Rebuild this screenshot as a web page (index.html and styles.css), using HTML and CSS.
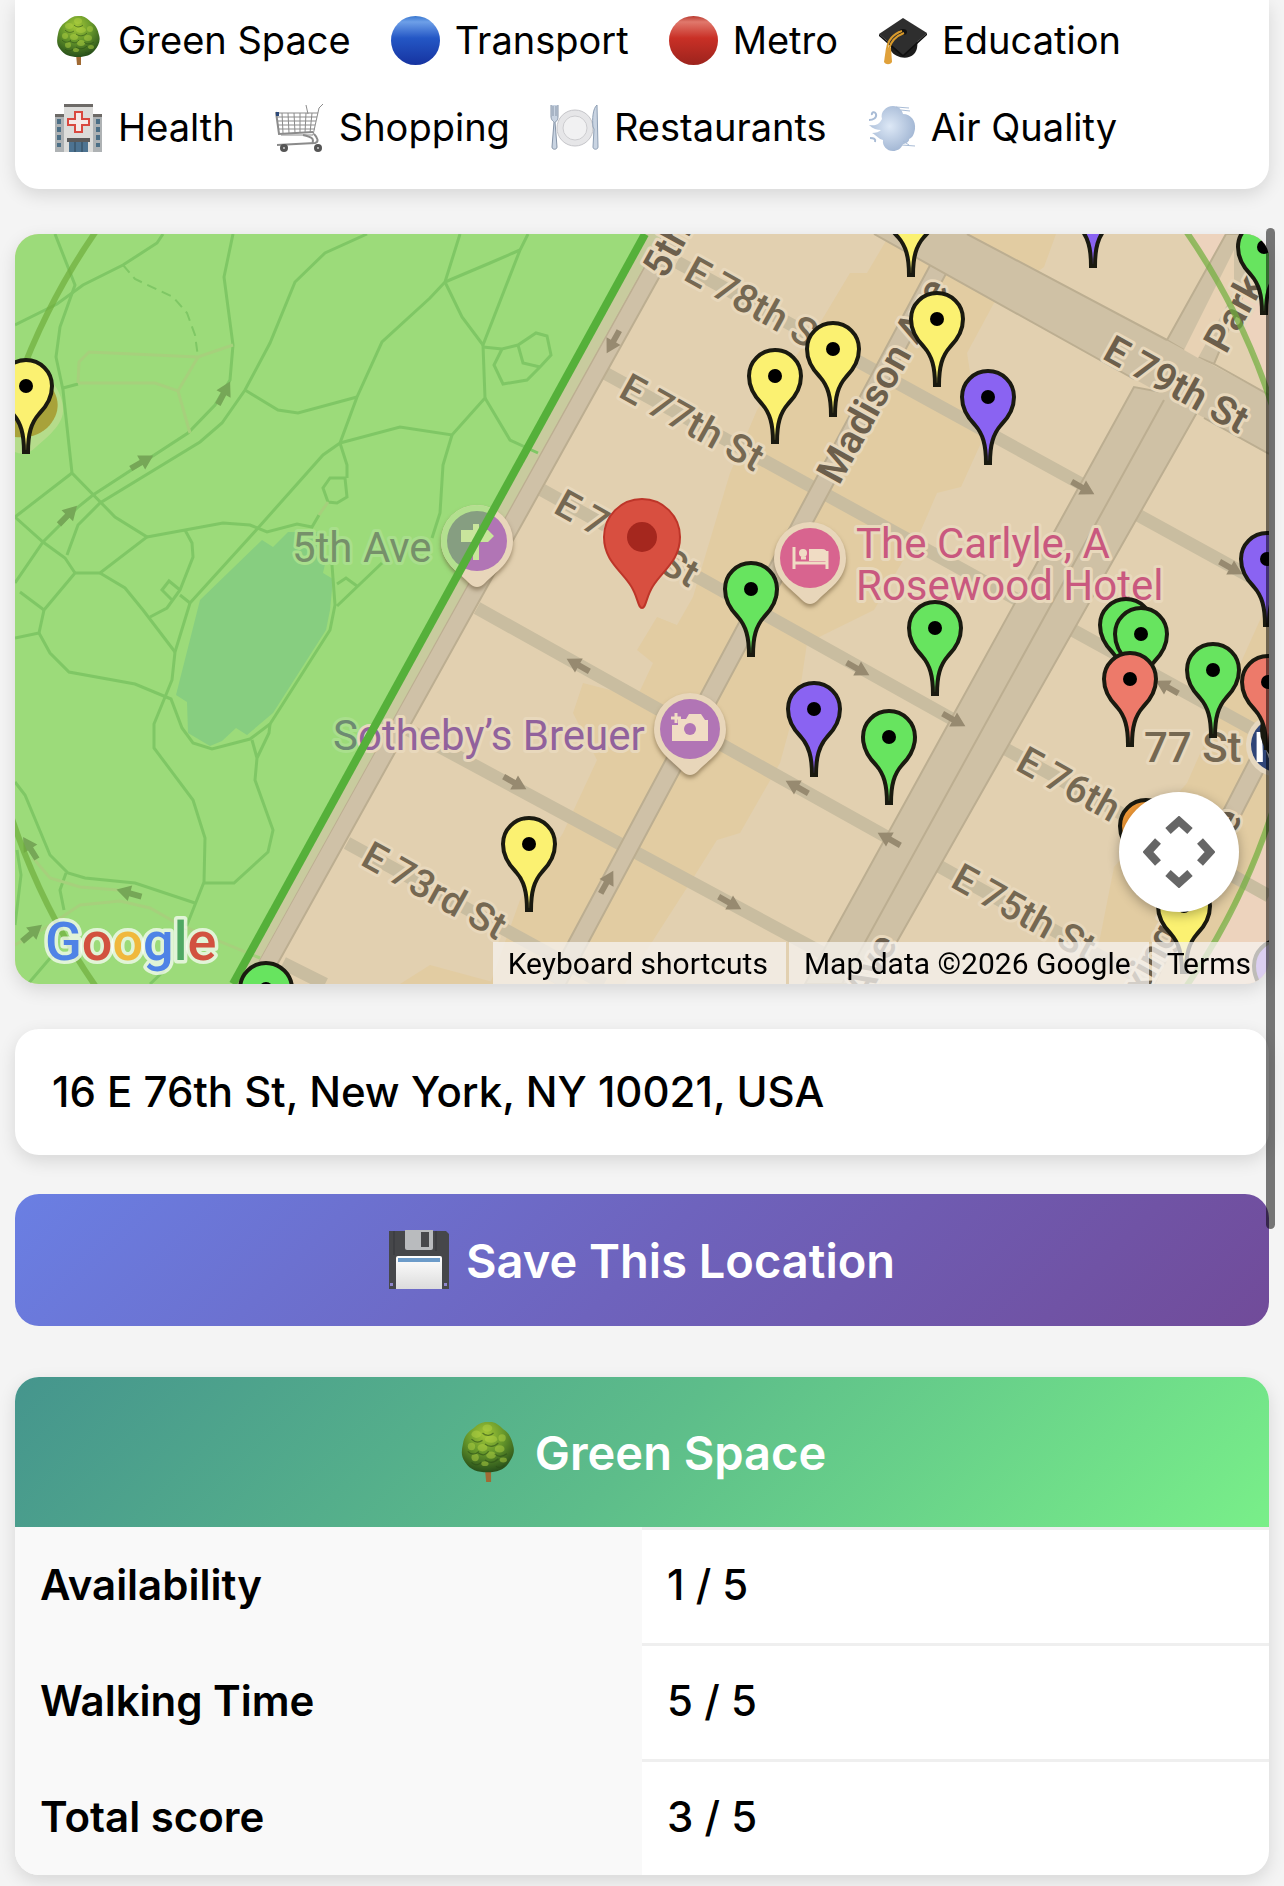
FILE: index.html
```html
<!DOCTYPE html>
<html lang="en">
<head>
  <meta charset="UTF-8">
  <meta name="viewport" content="width=device-width, initial-scale=1.0">
  <title>Neighborhood Score</title>
  <link rel="stylesheet" href="styles.css">
</head>
<body>
  <!-- Shared icon shapes -->
  <svg class="defs" aria-hidden="true">
    <defs>
      <radialGradient id="leaf" cx="45%" cy="25%" r="75%">
        <stop offset="0" stop-color="#a3c838"/>
        <stop offset="0.5" stop-color="#64952a"/>
        <stop offset="1" stop-color="#28501a"/>
      </radialGradient>
      <linearGradient id="blue-ball" x1="0" y1="0" x2="0" y2="1">
        <stop offset="0" stop-color="#3a78d0"/>
        <stop offset="0.12" stop-color="#6d9fe8"/>
        <stop offset="0.45" stop-color="#2457c5"/>
        <stop offset="1" stop-color="#1633a0"/>
      </linearGradient>
      <linearGradient id="red-ball" x1="0" y1="0" x2="0" y2="1">
        <stop offset="0" stop-color="#b93a30"/>
        <stop offset="0.12" stop-color="#e0786c"/>
        <stop offset="0.45" stop-color="#c93026"/>
        <stop offset="1" stop-color="#9c231d"/>
      </linearGradient>
      <radialGradient id="puff" cx="45%" cy="45%" r="60%">
        <stop offset="0" stop-color="#dde8f6"/>
        <stop offset="1" stop-color="#9fb4d2"/>
      </radialGradient>
      <linearGradient id="paper" x1="0" y1="0" x2="0" y2="1">
        <stop offset="0" stop-color="#ffffff"/>
        <stop offset="1" stop-color="#dcdcdc"/>
      </linearGradient>
      <symbol id="icon-tree" viewBox="0 0 49 49">
        <path d="M22 38h5v11h-4z" fill="#a06a34"/>
        <path d="M24 0c6-1 10 3 13 6 5 3 7 8 8 13 2 6-1 11-4 15-4 5-9 7-17 7-8 0-14-2-18-8-4-5-3-10-2-15 1-6 4-10 9-13 3-3 6-5 11-5z" fill="url(#leaf)"/>
        <g fill="#b2d243" opacity="0.5">
          <ellipse cx="24" cy="5" rx="4" ry="3"/><ellipse cx="15" cy="10" rx="4" ry="3"/><ellipse cx="27" cy="14" rx="5" ry="3"/>
          <ellipse cx="36" cy="13" rx="3" ry="3"/><ellipse cx="11" cy="20" rx="3" ry="3"/><ellipse cx="20" cy="21" rx="4" ry="3"/>
          <ellipse cx="34" cy="22" rx="4" ry="3"/><ellipse cx="27" cy="27" rx="4" ry="3"/><ellipse cx="14" cy="29" rx="3" ry="3"/>
          <ellipse cx="37" cy="31" rx="3" ry="2"/><ellipse cx="22" cy="34" rx="3" ry="2"/>
        </g>
        <g fill="none" stroke="#2c4f17" stroke-width="1" opacity="0.6">
          <path d="M11 14c3 3 6 3 9 1M20 9c3 3 7 2 9 0M22 18c4 3 8 2 11-1M8 24c3 3 6 3 9 0M16 25c4 3 7 2 9-1M30 26c3 3 7 2 10 0M22 31c4 3 8 2 11-1M11 33c3 3 6 2 8 0M31 36c2 2 5 1 7-1"/>
        </g>
      </symbol>
      <symbol id="icon-blue" viewBox="0 0 50 50"><circle cx="25" cy="25" r="25" fill="url(#blue-ball)"/></symbol>
      <symbol id="icon-red" viewBox="0 0 50 50"><circle cx="25" cy="25" r="25" fill="url(#red-ball)"/></symbol>
      <symbol id="icon-cap" viewBox="0 0 49 49">
        <path d="M13 24v11c4 6 16 10 23 3 3-3 4-8 3-16z" fill="#1c1c1c"/>
        <path d="M25 2L1 18l24 21 24-22z" fill="#2e2e2e"/>
        <path d="M1 18l24 21 24-22v2L25 41 1 20z" fill="#0f0f0f"/>
        <ellipse cx="25" cy="16" rx="4" ry="3" fill="#111"/>
        <path d="M24 15C15 18 10 23 9 33M26 17c-8 3-13 8-15 16" fill="none" stroke="#d99a2b" stroke-width="2"/>
        <path d="M8 32h5l1 14c-2 3-6 3-8 0z" fill="#e0a13a"/>
      </symbol>
      <symbol id="icon-hospital" viewBox="0 0 49 49">
        <path d="M1 12h47v37H1z" fill="#aeb2b4"/>
        <path d="M1 11h9v3H1zM39 11h9v3h-9zM10 1h29v3H10z" fill="#6d6a67"/>
        <path d="M10 4h29v45H10z" fill="#dcdcda"/>
        <path d="M3 16h4v5H3zM3 24h4v5H3zM3 32h4v5H3zM3 40h4v4H3zM42 16h4v5h-4zM42 24h4v5h-4zM42 32h4v5h-4zM42 40h4v4h-4z" fill="#4c6f86"/>
        <path d="M21 9h7v7h7v6h-7v7h-7v-7h-7v-6h7z" fill="#f5e9e7" stroke="#d9483f" stroke-width="2"/>
        <path d="M13 35h23v4H13z" fill="#5b5b5b"/>
        <path d="M15 39h19v10H15z" fill="#4d7391"/>
        <path d="M21 39v10M28 39v10" stroke="#2f4656" stroke-width="1"/>
      </symbol>
      <symbol id="icon-cart" viewBox="0 0 49 49">
        <g fill="none" stroke="#8b8b8b" stroke-width="1">
          <path d="M48 1l-4 4-6 27H6M1 10h42M2 14h40M3 18h38M3 22h37M4 26h36M7 10l1 20M13 10l1 20M19 10l1 20M25 10v20M31 10l-1 20M37 10l-2 20M31 2l2 9"/>
          <path d="M1 9l3 22 34-2M28 32c8 2 12 3 9 9M2 42l38-2c4-1 3-5-1-9" stroke-width="2"/>
        </g>
        <path d="M1 9h3v4H1z" fill="#2d4a7a"/>
        <circle cx="9" cy="45" r="4" fill="#555"/><circle cx="43" cy="45" r="4" fill="#555"/>
        <circle cx="9" cy="45" r="1" fill="#ccc"/><circle cx="43" cy="45" r="1" fill="#ccc"/>
      </symbol>
      <symbol id="icon-plate" viewBox="0 0 49 49">
        <circle cx="25" cy="25" r="18" fill="#e6e6e8" stroke="#c6c6ca"/>
        <circle cx="25" cy="25" r="12" fill="#f1f1f2" stroke="#cdcdd0"/>
        <path d="M1 2v11c0 4 2 5 3 6L2 44c0 3 5 3 5 0L5 19c2-1 3-2 3-6V2" fill="#c9d4e2" stroke="#8795a8" stroke-width="1"/>
        <path d="M3 3v10M6 3v10" stroke="#8795a8" stroke-width="1"/>
        <path d="M47 2c-4 3-5 14-4 22l1 2-1 18c0 3 5 3 5 0z" fill="#c9d4e2" stroke="#8fa0b5" stroke-width="1"/>
      </symbol>
      <symbol id="icon-wind" viewBox="0 0 49 49">
        <path d="M15 16c-2-7 4-13 11-13 6 0 9 4 10 8 8 0 13 7 12 15-1 6-3 9-6 10 1 3-5 5-6 5-2 5-6 7-10 7-6 0-11-5-10-11-4-1-6-4-11-7 4 0 7-1 9-3-4 0-8-1-12-5 6 1 10 0 13-6z" fill="url(#puff)"/>
        <path d="M29 4l13 1M34 7l9 1M35 42l13 1M36 38l6 4" stroke="#a9bcd6" stroke-width="1"/>
        <path d="M2 17c4 0 8-2 7-6-1-3-5-2-4 1M3 35c4 0 6 1 5 4" fill="none" stroke="#a9bcd6" stroke-width="2"/>
      </symbol>
      <symbol id="icon-floppy" viewBox="0 0 60 60">
        <path d="M0 1h57l3 3v55H0z" fill="#46474a"/>
        <path d="M5 1v24M47 1v20" stroke="#35363a" stroke-width="1"/>
        <path d="M16 0h28v18a2 2 0 0 1-2 2H18a2 2 0 0 1-2-2z" fill="#b9bbbe"/>
        <path d="M32 2h8v15h-8z" fill="#47484b"/>
        <path d="M9 26h42a2 2 0 0 1 2 2v31H7V28a2 2 0 0 1 2-2z" fill="url(#paper)"/>
        <path d="M9 28h42v4H9z" fill="#6c9bc9"/>
        <path d="M1 53h3v3H1zM55 53h3v3h-3z" fill="#8f86cc"/>
      </symbol>
      <symbol id="pin" viewBox="-30 -30 60 100" overflow="visible">
        <path d="M-2 66C-2 48-5 37-13 28-22 19-26 10-26 0A26 26 0 1 1 26 0C26 10 22 19 13 28 5 37 2 48 2 66z" stroke="#1a1a10" stroke-width="4"/>
        <circle r="7" fill="#000"/>
      </symbol>
      <symbol id="poi" viewBox="-40 -40 80 90" overflow="visible">
        <path d="M-8 42C-18 31-36 22-36 0A36 36 0 1 1 36 0C36 22 18 31 8 42Q0 50-8 42z" fill="#e8d6ba"/>
        <circle r="30"/>
      </symbol>
      <symbol id="way" viewBox="-13 -9 26 18" overflow="visible"><path d="M-13-3H-1V-8L13 0-1 8V3H-13z"/></symbol>
      <clipPath id="park-side"><path d="M15 234H645L233 984H15z"/></clipPath>
    </defs>
  </svg>

  <div class="scroll-thumb"></div>

  <main class="page">
    <!-- Legend -->
    <ul class="card legend">
      <li><svg class="icon"><use href="#icon-tree"/></svg>Green Space</li>
      <li><svg class="icon"><use href="#icon-blue"/></svg>Transport</li>
      <li><svg class="icon"><use href="#icon-red"/></svg>Metro</li>
      <li><svg class="icon"><use href="#icon-cap"/></svg>Education</li>
      <li><svg class="icon"><use href="#icon-hospital"/></svg>Health</li>
      <li><svg class="icon"><use href="#icon-cart"/></svg>Shopping</li>
      <li><svg class="icon"><use href="#icon-plate"/></svg>Restaurants</li>
      <li><svg class="icon"><use href="#icon-wind"/></svg>Air Quality</li>
    </ul>

    <!-- Map -->
    <section class="map" aria-label="Map">
      <svg class="map-canvas" viewBox="15 234 1254 750" preserveAspectRatio="xMidYMid slice">
        <rect x="15" y="234" width="1254" height="750" fill="#edd3bd"/>
        <circle cx="641" cy="609" r="663" fill="#e2d0b0"/>

        <!-- Commercial blocks -->
        <g fill="#e2cca2">
          <path d="M850 273L820 323 757 410 730 473 693 597 677 625 657 617 637 650 653 663 637 697 583 683 573 713 597 760 563 833 520 900 490 984H625L690 883 717 840 740 833 780 763 800 690 807 643 874 610 921 530 937 493 961 487 981 443 967 353 994 303 1044 267 1056 234H890L867 273z"/>
          <path d="M430 965L500 984H400z"/>
          <path d="M1269 600L1215 720 1187 783 1114 867 1101 933 1090 984H1180L1240 900 1269 830z"/>
        </g>

        <!-- Streets -->
        <g class="street">
          <path d="M677 262L1269 587M603 372L1269 738M542 490L1269 896M477 608L1150 984M405 728L880 984M347 843L604 984M283 963L325 984"/>
        </g>
        <g class="avenue-edge"><path d="M673 234L256 984M957 234L556 984M1280 720L1144 984"/></g>
        <g class="avenue"><path d="M673 234L256 984M957 234L556 984M1280 720L1144 984"/></g>
        <g fill="#cfc1a5" stroke="#bcae91" stroke-width="2">
          <path d="M1167 340L1226 234H1269L1214 364 1197 357 1184 350z"/>
          <path d="M1134 387L805 984H873L1204 400z"/>
        </g>
        <path d="M874 234H967L1269 395V454z" fill="#cfc1a5"/>
        <path d="M967 234L1167 340M1214 364L1269 395M874 234L1134 379M1204 418L1269 454M1164 400L842 984" fill="none" stroke="#bcae91" stroke-width="2"/>
        <path d="M1184 350l14 8 36-66v-42z" fill="#e8d2b4"/>

        <!-- Park -->
        <path d="M645 234H662L246 984H233z" fill="#c8cb9e"/>
        <path d="M15 234H645L233 984H15z" fill="#9cdb7a"/>
        <path d="M200 600L262 540 273 547 288 532 318 532 327 555 323 573 333 579 330 610 326 630 273 713 247 735 236 728 222 741 210 746 188 733 187 702 176 695z" fill="#87ce80"/>
        <g class="trail">
          <path d="M55 234L75 285 60 327 56 357 63 390 72 473 115 517 147 537 100 573H75L44 610 39 633 15 638"/>
          <path d="M15 325L57 304 83 285 123 265 157 243 163 234"/>
          <path d="M15 583L43 542 78 507 93 495 188 433 215 405 230 380 233 345 224 277 233 234"/>
          <path d="M67 555L78 525 100 503 200 442 222 423 245 390 270 343 295 282 325 253 367 234"/>
          <path d="M460 234L445 282 430 298 382 342 357 397 340 443 323 455 258 528 190 603 175 652 172 680 154 724V748L193 800 205 838 204 882 185 930"/>
          <path d="M245 390L278 410 298 413 357 397M340 443L400 427 452 435 485 398 483 345 520 250 528 234"/>
          <path d="M445 282L462 317 483 345M445 282L490 263 520 250M485 398L510 440 538 453M452 435L443 465 440 513 432 538"/>
          <path d="M483 347L502 349 518 345 536 333 547 336 551 355 540 367 527 380 503 384 494 365 502 349M518 345L523 363 540 367"/>
          <path d="M72 473L15 517 43 542 65 558 75 573M63 388L78 384"/>
          <path d="M147 537L223 523 250 525 267 532 297 524 312 527 319 515M328 502L323 488 330 478 345 478 347 497 337 503zM340 443L347 465V478"/>
          <path d="M185 530L192 543 193 557 180 590 167 608 150 617M180 590L169 581 162 590 172 600M180 595L190 603"/>
          <path d="M100 573L125 588 143 610 175 652M20 592L44 610M39 633L50 653 69 672 135 684 171 699 182 728 193 743 212 749 250 739 270 724 330 630 335 605 332 565M337 606L382 563M337 584L346 578 357 586"/>
          <path d="M204 883H234L268 852 273 830 255 780 257 758 252 740M257 758L269 733 270 724"/>
          <path d="M15 782L25 795 50 855 68 873 85 878 135 883 195 903M66 873L60 890 64 910M17 850L21 875 15 925M57 950L28 984M165 970L150 984"/>
          <path d="M123 265L135 279 173 297 187 313 195 335 198 357" stroke-dasharray="10 6" stroke-width="2"/>
        </g>
        <g class="bridle">
          <path d="M78 383L79 362 89 352 198 357 233 345M78 383H155L178 391 198 357M178 391L190 433M319 515L328 502"/>
          <path d="M33 858L50 878 80 887 118 890M15 945L50 925 80 905 120 901 150 908 180 925 260 958"/>
        </g>

        <!-- One-way arrows -->
        <g fill="#978a70">
          <use href="#way" x="-13" y="-9" width="26" height="18" transform="translate(613 342) rotate(119)"/>
          <use href="#way" x="-13" y="-9" width="26" height="18" transform="translate(1083 488) rotate(29)"/>
          <use href="#way" x="-13" y="-9" width="26" height="18" transform="translate(1231 568) rotate(29)"/>
          <use href="#way" x="-13" y="-9" width="26" height="18" transform="translate(578 665) rotate(209)"/>
          <use href="#way" x="-13" y="-9" width="26" height="18" transform="translate(515 783) rotate(29)"/>
          <use href="#way" x="-13" y="-9" width="26" height="18" transform="translate(797 787) rotate(209)"/>
          <use href="#way" x="-13" y="-9" width="26" height="18" transform="translate(730 903) rotate(29)"/>
          <use href="#way" x="-13" y="-9" width="26" height="18" transform="translate(607 882) rotate(299)"/>
          <use href="#way" x="-13" y="-9" width="26" height="18" transform="translate(858 669) rotate(29)"/>
          <use href="#way" x="-13" y="-9" width="26" height="18" transform="translate(954 720) rotate(29)"/>
          <use href="#way" x="-13" y="-9" width="26" height="18" transform="translate(889 839) rotate(209)"/>
          <use href="#way" x="-13" y="-9" width="26" height="18" transform="translate(1167 687) rotate(209)"/>
        </g>
        <g fill="#76a757">
          <use href="#way" x="-13" y="-9" width="26" height="18" transform="translate(142 462) rotate(-30)"/>
          <use href="#way" x="-13" y="-9" width="26" height="18" transform="translate(68 515) rotate(-46)"/>
          <use href="#way" x="-13" y="-9" width="26" height="18" transform="translate(224 393) rotate(-62)"/>
          <use href="#way" x="-13" y="-9" width="26" height="18" transform="translate(30 848) rotate(-122)"/>
          <use href="#way" x="-13" y="-9" width="26" height="18" transform="translate(129 893) rotate(196)"/>
          <use href="#way" x="-13" y="-9" width="26" height="18" transform="translate(32 933) rotate(-40)"/>
        </g>

        <!-- Street names -->
        <g class="label">
          <text transform="translate(682 279) rotate(29)">E 78th St</text>
          <text transform="translate(617 396) rotate(29)">E 77th St</text>
          <text transform="translate(552 512) rotate(29)">E 76th St</text>
          <text transform="translate(359 864) rotate(29)">E 73rd St</text>
          <text transform="translate(1014 769) rotate(29)">E 76th St</text>
          <text transform="translate(949 886) rotate(29)">E 75th St</text>
          <text x="1144" y="762" class="station">77 St</text>
        </g>
        <g class="label major">
          <text transform="translate(1101 358) rotate(29)">E 79th St</text>
          <text transform="translate(665 280) rotate(-61)">5th Ave</text>
          <text transform="translate(839 486) rotate(-61)">Madison Ave</text>
          <text transform="translate(1226 355) rotate(-61)">Park Ave</text>
          <text transform="translate(898 944) rotate(-61)" text-anchor="end">Park Ave</text>
          <text transform="translate(1243 818) rotate(-61)" text-anchor="end">Lexington Ave</text>
        </g>

        <!-- Places -->
        <g class="place">
          <text x="292" y="562" fill="#76906a" stroke="#a9df8c">5th Ave</text>
          <text x="333" y="750" fill="#91629c"><tspan fill="#6d8a72" stroke="#a9df8c">S</tspan>otheby’s Breuer</text>
          <text x="856" y="558" fill="#c9587f">The Carlyle, A</text>
          <text x="856" y="600" fill="#c9587f">Rosewood Hotel</text>
        </g>
        <g class="poi">
          <use href="#poi" x="437" y="501" width="80" height="90" fill="#b175b5"/>
          <use href="#poi" x="770" y="518" width="80" height="90" fill="#d8648f"/>
          <use href="#poi" x="650" y="689" width="80" height="90" fill="#b175b5"/>
        </g>
        <g clip-path="url(#park-side)">
          <path d="M469 583C459 572 441 563 441 541A36 36 0 0 1 513 541L485 583z" fill="#b3e08f"/>
          <circle cx="477" cy="541" r="30" fill="#869e81"/>
        </g>
        <path d="M461 530h12v-6h6v6h9l6 6-6 6h-9v18h-6v-18h-12z" fill="#c9e59c"/>
        <path d="M794 547v22M794 563h33M827 569V551M801 558h5" fill="none" stroke="#f0dcc4" stroke-width="3"/>
        <circle cx="803" cy="553" r="4" fill="#f0dcc4"/>
        <path d="M809 549h13q5 0 5 5v7h-18z" fill="#f0dcc4"/>
        <path d="M672 725h6v-6h8l3-5h12l4 6h3v21h-36z" fill="#f0dcc4"/>
        <path d="M676 713v10M671 718h10" stroke="#f0dcc4" stroke-width="3"/>
        <circle cx="690" cy="729" r="6" fill="#b175b5"/>
        <path d="M15 404v48c7 3 14 2 21-5 14-12 28-24 27-38 0-11-6-22-12-28z" fill="#b5dc8b"/>
        <path d="M15 380h30c16 15 17 33 2 48-9 8-20 10-32 9z" fill="#a8a23a"/>
        <circle cx="1278" cy="745" r="32" fill="#e6d8c0"/>
        <circle cx="1278" cy="745" r="27" fill="#2f4578"/>
        <text x="1254" y="762" class="metro">M</text>

        <!-- Search radius and park edge -->
        <path d="M645 234L233 984" stroke="#55b03a" stroke-width="8"/>
        <circle cx="641" cy="609" r="663" fill="none" stroke="#6fae3c" stroke-opacity="0.7" stroke-width="6"/>

        <!-- Result pins -->
        <g fill="#fbf171">
          <use href="#pin" x="-4" y="356" width="60" height="100"/>
          <use href="#pin" x="745" y="346" width="60" height="100"/>
          <use href="#pin" x="803" y="319" width="60" height="100"/>
          <use href="#pin" x="907" y="289" width="60" height="100"/>
          <use href="#pin" x="881" y="179" width="60" height="100"/>
          <use href="#pin" x="499" y="814" width="60" height="100"/>
          <use href="#pin" x="1154" y="876" width="60" height="100"/>
        </g>
        <g fill="#8a63f2">
          <use href="#pin" x="958" y="367" width="60" height="100"/>
          <use href="#pin" x="1063" y="170" width="60" height="100"/>
          <use href="#pin" x="1237" y="529" width="60" height="100"/>
          <use href="#pin" x="784" y="679" width="60" height="100"/>
          <use href="#pin" x="1250" y="936" width="60" height="100"/>
        </g>
        <g fill="#67e45f">
          <use href="#pin" x="1258" y="700" width="60" height="100"/>
          <use href="#pin" x="721" y="559" width="60" height="100"/>
          <use href="#pin" x="905" y="598" width="60" height="100"/>
          <use href="#pin" x="859" y="707" width="60" height="100"/>
          <use href="#pin" x="1096" y="595" width="60" height="100"/>
          <use href="#pin" x="1111" y="604" width="60" height="100"/>
          <use href="#pin" x="1183" y="640" width="60" height="100"/>
          <use href="#pin" x="1234" y="217" width="60" height="100"/>
          <use href="#pin" x="236" y="959" width="60" height="100"/>
        </g>
        <g fill="#ed7a6a">
          <use href="#pin" x="1100" y="649" width="60" height="100"/>
          <use href="#pin" x="1238" y="652" width="60" height="100"/>
        </g>
        <use href="#pin" x="1116" y="796" width="60" height="100" fill="#f29b38"/>

        <!-- Selected location -->
        <path d="M642 608C638 608 638 597 631 586 622 571 604 561 604 537A38 38 0 1 1 680 537C680 561 662 571 653 586 646 597 646 608 642 608z" fill="#d84f40" stroke="#bd3529" stroke-width="2"/>
        <circle cx="642" cy="537" r="15" fill="#a5271e"/>

        <text x="45" y="960" class="google"><tspan fill="#4f83e6">G</tspan><tspan fill="#d2513f">o</tspan><tspan fill="#f0b83c">o</tspan><tspan fill="#4f83e6">g</tspan><tspan fill="#4fa863">l</tspan><tspan fill="#d2513f">e</tspan></text>
      </svg>

      <button type="button" class="camera" aria-label="Map camera controls">
        <svg viewBox="0 0 72 72"><path d="M25 15L36 5 47 15M25 57L36 67 47 57M15 25L5 36 15 47M57 25L67 36 57 47" fill="none" stroke="#666" stroke-width="8"/></svg>
      </button>
      <div class="attribution">
        <button type="button">Keyboard shortcuts</button>
        <span>Map data ©2026 Google</span>
        <a href="#terms">Terms</a>
      </div>
    </section>

    <div class="card address">16 E 76th St, New York, NY 10021, USA</div>

    <button type="button" class="save"><svg class="icon"><use href="#icon-floppy"/></svg>Save This Location</button>

    <!-- Scores -->
    <section class="card score">
      <h2><svg class="icon"><use href="#icon-tree"/></svg>Green Space</h2>
      <table>
        <tr><th scope="row">Availability</th><td>1 / 5</td></tr>
        <tr><th scope="row">Walking Time</th><td>5 / 5</td></tr>
        <tr><th scope="row">Total score</th><td>3 / 5</td></tr>
      </table>
    </section>
  </main>
</body>
</html>
```
FILE: styles.css
```css
* {
  box-sizing: border-box;
}

body {
  margin: 0;
  background-color: #f4f4f4;
  color: #000;
  font-family: Inter, "Liberation Sans", sans-serif;
  overflow-x: hidden;
}

.defs {
  position: absolute;
  width: 0;
  height: 0;
}

.page {
  padding: 0 15px 12px;
}

.card {
  background-color: #fff;
  border-radius: 24px;
  box-shadow: 0 6px 18px rgba(0, 0, 0, 0.12);
}

.icon {
  flex: none;
  width: 49px;
  height: 49px;
}

/* Legend */
.legend {
  display: flex;
  flex-wrap: wrap;
  gap: 38px 40px;
  margin: 0 0 45px;
  padding: 16px 39px 37px;
  border-radius: 0 0 24px 24px;
  list-style: none;
  font-size: 38px;
  line-height: 49px;
}

.legend li {
  display: flex;
  align-items: center;
  gap: 15px;
  white-space: nowrap;
}

/* Map */
.map {
  position: relative;
  height: 750px;
  margin-bottom: 45px;
  border-radius: 24px;
  overflow: hidden;
  box-shadow: 0 6px 18px rgba(0, 0, 0, 0.12);
}

.map-canvas {
  display: block;
  width: 100%;
  height: 100%;
  font-family: Roboto, sans-serif;
}

.street,
.avenue,
.avenue-edge,
.trail,
.bridle {
  fill: none;
}

.street {
  stroke: #c9bda0;
  stroke-width: 13px;
}

.avenue-edge {
  stroke: #bcae91;
  stroke-width: 20px;
}

.avenue {
  stroke: #cfc1a7;
  stroke-width: 16px;
}

.trail {
  stroke: #7fc765;
  stroke-width: 3px;
}

.bridle {
  stroke: #a6d07c;
  stroke-width: 3px;
}

.label,
.place {
  font-size: 39px;
  font-weight: 500;
  fill: #756852;
  stroke: #e8d8bc;
  stroke-width: 6px;
  stroke-linejoin: round;
  paint-order: stroke;
}

.label.major {
  font-weight: 600;
  fill: #6c5f4c;
}

.place,
.station {
  font-size: 42px;
}

.place {
  font-weight: 400;
}

.poi {
  filter: drop-shadow(0 3px 2px rgba(90, 70, 40, 0.5));
}

.metro {
  font-size: 42px;
  font-weight: 700;
  fill: #fff;
}

.google {
  font-size: 54px;
  font-weight: 500;
  stroke: rgba(255, 255, 255, 0.7);
  stroke-width: 7px;
  stroke-linejoin: round;
  paint-order: stroke;
}

.camera {
  position: absolute;
  right: 30px;
  bottom: 72px;
  display: flex;
  align-items: center;
  justify-content: center;
  width: 120px;
  height: 120px;
  padding: 0;
  border: 0;
  border-radius: 50%;
  background-color: #fff;
  box-shadow: 0 3px 12px rgba(0, 0, 0, 0.3);
}

.camera svg {
  width: 72px;
  height: 72px;
}

.attribution {
  position: absolute;
  right: 0;
  bottom: 0;
  display: flex;
  gap: 3px;
  font-family: Roboto, sans-serif;
  font-size: 30px;
  line-height: 40px;
}

.attribution > * {
  padding: 2px 18px 0 15px;
  border: 0;
  background-color: rgba(245, 243, 240, 0.75);
  color: #000;
  font: inherit;
  text-decoration: none;
  white-space: nowrap;
}

/* Address and save button */
.address {
  margin-bottom: 39px;
  padding: 38px 37px;
  font-size: 42px;
  font-weight: 500;
  line-height: 50px;
}

.save {
  display: flex;
  align-items: center;
  justify-content: center;
  gap: 17px;
  width: 100%;
  height: 132px;
  margin-bottom: 51px;
  border: 0;
  border-radius: 24px;
  background: linear-gradient(135deg, #6a7fe3, #6e63bd 50%, #714b99);
  color: #fff;
  font-family: inherit;
  font-size: 47px;
  font-weight: 600;
}

.save .icon {
  width: 60px;
  height: 60px;
}

/* Score card */
.score {
  overflow: hidden;
}

.score h2 {
  display: flex;
  align-items: center;
  justify-content: center;
  gap: 17px;
  height: 150px;
  margin: 0;
  background: linear-gradient(135deg, #45958d, #5dbd8a 50%, #79ef89);
  color: #fff;
  font-size: 47px;
  font-weight: 600;
}

.score h2 .icon {
  width: 60px;
  height: 60px;
}

.score table {
  width: 100%;
  table-layout: fixed;
  border-spacing: 0;
}

.score th,
.score td {
  height: 116px;
  padding: 0 25px 2px;
  font-size: 42px;
  text-align: left;
}

.score th {
  background-color: #f9f9f9;
  font-weight: 600;
}

.score td {
  padding-bottom: 4px;
  border-top: 3px solid #efefef;
  font-weight: 500;
}

/* Overlay scrollbar */
.scroll-thumb {
  position: fixed;
  top: 228px;
  right: 9px;
  z-index: 1;
  width: 9px;
  height: 1001px;
  border-radius: 5px;
  background-color: rgba(0, 0, 0, 0.52);
}
```
